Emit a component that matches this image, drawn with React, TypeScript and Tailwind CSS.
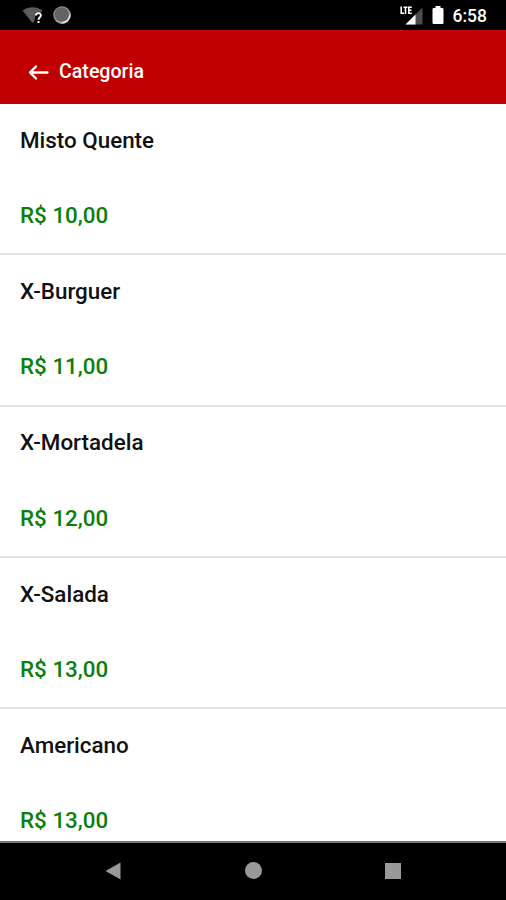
type Product = {
  name: string;
  price: string;
};

const products: Product[] = [
  { name: "Misto Quente", price: "R$ 10,00" },
  { name: "X-Burguer", price: "R$ 11,00" },
  { name: "X-Mortadela", price: "R$ 12,00" },
  { name: "X-Salada", price: "R$ 13,00" },
  { name: "Americano", price: "R$ 13,00" },
];

const StatusBar = () => (
  <div className="flex h-[30px] shrink-0 items-center justify-between bg-black pl-[22px] pr-[19px] text-white">
    <div className="flex items-center gap-[10px]">
      {/* Wifi without connection */}
      <svg width="21" height="20" viewBox="0 0 21 20" fill="none">
        <path d="M0.5 5.5C6 1 15 1 20.5 5.5L19 7.5H14L12.5 16L10.5 18Z" fill="#5c5c5c" />
        <path d="M13.9 10.6C13.9 7.4 18.9 7.4 18.9 10.4C18.9 12.3 16.5 12.4 16.5 14.8" stroke="#fff" strokeWidth="1.9" />
        <path d="M15.5 16H17.5V18H15.5Z" fill="#fff" />
      </svg>
      <svg width="18" height="18" viewBox="0 0 18 18">
        <circle cx="9" cy="9" r="8.7" fill="#999" />
        <path d="M17.4 7A8.7 8.7 0 0 1 7 17.4L14.5 14Z" fill="#eee" />
        <circle cx="8.6" cy="8.4" r="7.2" fill="#636363" />
      </svg>
    </div>
    <div className="flex items-center">
      <svg width="23" height="20" viewBox="0 0 23 20" fill="none">
        <path d="M22.5 2.5V19.5H5.5Z" fill="#4c4c4c" />
        <path d="M15.5 9.5V19.5H5.5Z" fill="#fff" />
        <path d="M1.2 1.5V8.3H4M3.5 2.2H7.5M5.5 2.2V9M11.8 2.2H8.8V8.3H11.8M8.8 5.2H11.5" stroke="#fff" strokeWidth="1.6" />
      </svg>
      <svg className="ml-[9px]" width="12" height="20" viewBox="0 0 12 20" fill="#fff">
        <path d="M3.5 1H8.5V3H10C11 3 11.5 3.5 11.5 4.5V17.5C11.5 18.5 11 19 10 19H2C1 19 0.5 18.5 0.5 17.5V4.5C0.5 3.5 1 3 2 3H3.5Z" />
      </svg>
      <span className="ml-[9px] mt-[2px] text-[17.5px] leading-5 font-medium">6:58</span>
    </div>
  </div>
);

const Header = () => (
  <header className="flex h-[74px] shrink-0 items-center bg-[#c00000] pl-7 pt-[9px] text-white">
    <svg width="22" height="18" viewBox="0 0 22 18" fill="none" stroke="#fff" strokeWidth="2.3" strokeLinecap="round" strokeLinejoin="round">
      <path d="M19.5 9.5H2M8 3.5L2 9.5L8 15.5" />
    </svg>
    <h1 className="ml-[9px] text-[19.6px] leading-6 font-medium">Categoria</h1>
  </header>
);

const ProductItem = ({ name, price }: Product) => (
  <li className="flex h-[151.3px] shrink-0 flex-col justify-between border-b-2 border-[#e2e2e2] px-5 pt-[21.8px] pb-[24.3px] text-[22.4px] leading-7 font-medium">
    <span className="text-[#111]">{name}</span>
    <span className="text-[#0a800a]">{price}</span>
  </li>
);

const NavigationBar = () => (
  <nav className="grid h-[59px] shrink-0 grid-cols-[1fr_140px_140px_1fr] border-t-2 border-[#777] bg-black pb-[2px]">
    <div className="flex items-center justify-end">
      <svg className="-mr-2" width="16" height="18" viewBox="0 0 16 18" fill="#999">
        <path d="M15.5 0.5V17.5L0.5 9Z" />
      </svg>
    </div>
    <div className="flex items-center justify-end">
      <svg className="-mr-[9px]" width="17" height="17" viewBox="0 0 17 17" fill="#999">
        <circle cx="8.5" cy="8.5" r="8.5" />
      </svg>
    </div>
    <div className="flex items-center justify-end">
      <div className="-mr-2 h-4 w-4 bg-[#999]" />
    </div>
  </nav>
);

export default function App() {
  return (
    <div className="flex h-[900px] w-full flex-col overflow-hidden bg-white font-['Roboto',sans-serif]">
      <StatusBar />
      <Header />
      <ul className="flex min-h-0 flex-1 flex-col overflow-hidden">
        {products.map((product) => (
          <ProductItem key={product.name} {...product} />
        ))}
      </ul>
      <NavigationBar />
    </div>
  );
}
